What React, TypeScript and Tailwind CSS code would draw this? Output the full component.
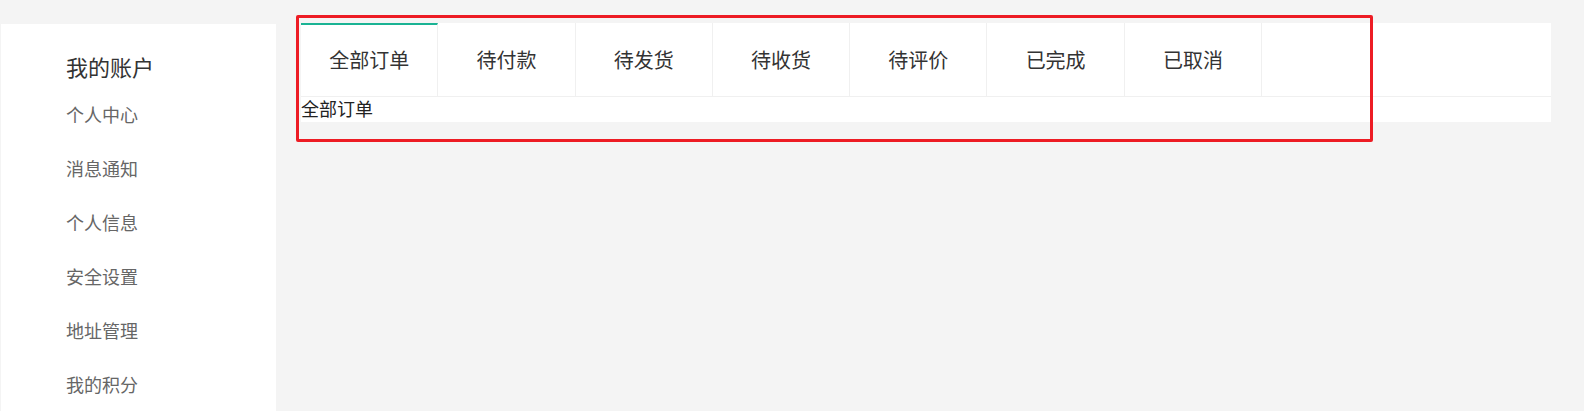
import React, { useState } from "react";

const menu = ["个人中心", "消息通知", "个人信息", "安全设置", "地址管理", "我的积分"];
const tabs = ["全部订单", "待付款", "待发货", "待收货", "待评价", "已完成", "已取消"];

export default function App() {
  const [active, setActive] = useState(0);

  return (
    <div
      className="relative flex h-[411px] overflow-hidden bg-[#f4f4f4]"
      style={{ fontFamily: '"Noto Sans CJK SC", "Noto Sans", sans-serif' }}
    >
      <aside className="ml-px mt-[24px] w-[275px] shrink-0 bg-white pl-[65px] pt-[29px]">
        <p className="text-[22px] leading-[26px] text-[#333]">我的账户</p>
        <div className="mt-[24px] flex flex-col">
          {menu.map((item) => (
            <a key={item} className="h-[54px] text-[18px] leading-[22px] text-[#666]">
              {item}
            </a>
          ))}
        </div>
      </aside>

      <main className="ml-[25px] mt-[23px] w-[1250px] self-start bg-white">
        <div className="flex h-[74px] border-b border-[#f0f0f0]">
          {tabs.map((t, i) => (
            <button
              key={t}
              onClick={() => setActive(i)}
              className={
                "flex h-full w-[137.3px] items-center justify-center border-r border-[#f0f0f0] text-[20px] text-[#333] " +
                (i === active ? "border-t-2 border-t-[#1ab394] pb-[2px]" : "")
              }
            >
              {t}
            </button>
          ))}
        </div>
        <div className="h-[25px] text-[18px] leading-[22px] text-[#222]">{tabs[active]}</div>
      </main>

      {/* annotation frame */}
      <div className="pointer-events-none absolute left-[296px] top-[15px] h-[127px] w-[1077px] rounded-[2px] border-[3px] border-[#ed1c24]" />
    </div>
  );
}
